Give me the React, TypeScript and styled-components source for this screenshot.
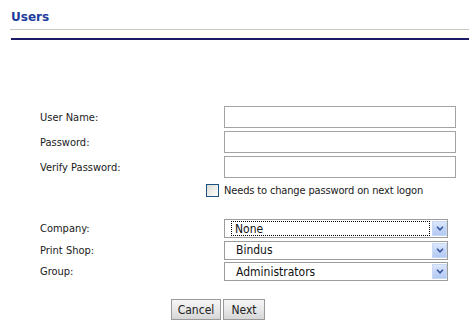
import React from "react";
import styled, { createGlobalStyle } from "styled-components";

const Global = createGlobalStyle`
  html, body { margin: 0; padding: 0; background: #ffffff; }
  body { font-family: "DejaVu Sans Condensed", "DejaVu Sans", sans-serif; font-size: 11px; color: #1a1a1a; }
`;

const Page = styled.div`
  width: 469px;
  height: 336px;
  overflow: hidden;
`;

const Header = styled.div`
  padding-top: 10px;
`;

const Title = styled.h1`
  margin: 0 0 0 10px;
  height: 19px;
  padding-left: 1px;
  font-family: "DejaVu Sans", sans-serif;
  font-weight: bold;
  font-size: 12px;
  line-height: 14px;
  color: #1c3d9b;
  border-bottom: 1px solid #c8c8c8;
`;

const Strip = styled.div`
  height: 8px;
  margin-left: 11px;
  background: #fffef8;
  border-bottom: 2px solid #1a1a66;
`;

const Form = styled.div`
  padding-top: 66px;
`;

const FieldGrid = styled.div<{ $gap: number }>`
  display: grid;
  grid-template-columns: 184px auto;
  row-gap: ${(p) => p.$gap}px;
  padding-left: 40px;
  align-items: center;
`;

const Label = styled.label`
  font-size: 11px;
  color: #1a1a1a;
`;

const TextInput = styled.input`
  box-sizing: border-box;
  width: 232px;
  height: 22px;
  margin: 0;
  border: 1px solid #a3a3a3;
  background: #fff;
  padding: 0 3px;
  font: inherit;
`;

const CheckRow = styled.div`
  display: flex;
  align-items: center;
  gap: 5px;
  padding-left: 206px;
  margin-top: 6px;
  height: 13px;
`;

const Check = styled.span`
  box-sizing: border-box;
  width: 13px;
  height: 13px;
  border: 1px solid #1c5180;
  background: linear-gradient(135deg, #dcdcd6 0%, #f4f4f2 70%, #ffffff 100%);
`;

const CheckText = styled.span`
  font-size: 11px;
  letter-spacing: -0.15px;
  color: #1a1a1a;
`;

const SelectSection = styled.div`
  margin-top: 22px;
`;

const SelectBox = styled.div`
  box-sizing: border-box;
  width: 224px;
  height: 19px;
  border: 1px solid #9c9c9c;
  background: #fff;
  display: flex;
  align-items: stretch;
  padding: 1px 0 1px 1px;
`;

const SelectValue = styled.div<{ $focused?: boolean }>`
  flex: 1;
  display: flex;
  align-items: center;
  margin-left: ${(p) => (p.$focused ? "5px" : "0")};
  padding-left: ${(p) => (p.$focused ? "3px" : "9px")};
  margin-right: 2px;
  border: 1px dotted ${(p) => (p.$focused ? "#000" : "transparent")};
  font-size: 12px;
  color: #111;
`;

const ArrowBox = styled.div`
  box-sizing: border-box;
  width: 15px;
  background: linear-gradient(180deg, #dce8fc 0%, #c4d6f6 50%, #b2c9f2 100%);
  border: 1px solid #c8d7f4;
  display: flex;
  align-items: center;
  justify-content: center;
`;

const ButtonRow = styled.div`
  display: flex;
  gap: 2px;
  padding-left: 171px;
  margin-top: 18px;
`;

const Button = styled.button<{ $w: number }>`
  box-sizing: border-box;
  width: ${(p) => p.$w}px;
  height: 21px;
  margin: 0;
  padding: 0;
  border: 1px solid #9a9a9a;
  background: linear-gradient(180deg, #f6f6f6 0%, #e6e6e6 55%, #d6d6d6 100%);
  font-family: "DejaVu Sans Condensed", "DejaVu Sans", sans-serif;
  font-size: 12px;
  color: #222;
`;

const Chevron = () => (
  <svg width="8" height="5" viewBox="0 0 8 5">
    <path d="M1 0.8 L4 3.8 L7 0.8" fill="none" stroke="#3a55a0" strokeWidth="1.6" />
  </svg>
);

const Select = ({ value, focused }: { value: string; focused?: boolean }) => (
  <SelectBox>
    <SelectValue $focused={focused}>{value}</SelectValue>
    <ArrowBox>
      <Chevron />
    </ArrowBox>
  </SelectBox>
);

export default function App() {
  return (
    <Page>
      <Global />
      <Header>
        <Title>Users</Title>
        <Strip />
      </Header>
      <Form>
        <FieldGrid $gap={3}>
          <Label>User Name:</Label>
          <TextInput type="text" />
          <Label>Password:</Label>
          <TextInput type="password" />
          <Label>Verify Password:</Label>
          <TextInput type="password" />
        </FieldGrid>
        <CheckRow>
          <Check />
          <CheckText>Needs to change password on next logon</CheckText>
        </CheckRow>
        <SelectSection>
          <FieldGrid $gap={2.5}>
            <Label>Company:</Label>
            <Select value="None" focused />
            <Label>Print Shop:</Label>
            <Select value="Bindus" />
            <Label>Group:</Label>
            <Select value="Administrators" />
          </FieldGrid>
        </SelectSection>
        <ButtonRow>
          <Button $w={50}>Cancel</Button>
          <Button $w={42}>Next</Button>
        </ButtonRow>
      </Form>
    </Page>
  );
}
